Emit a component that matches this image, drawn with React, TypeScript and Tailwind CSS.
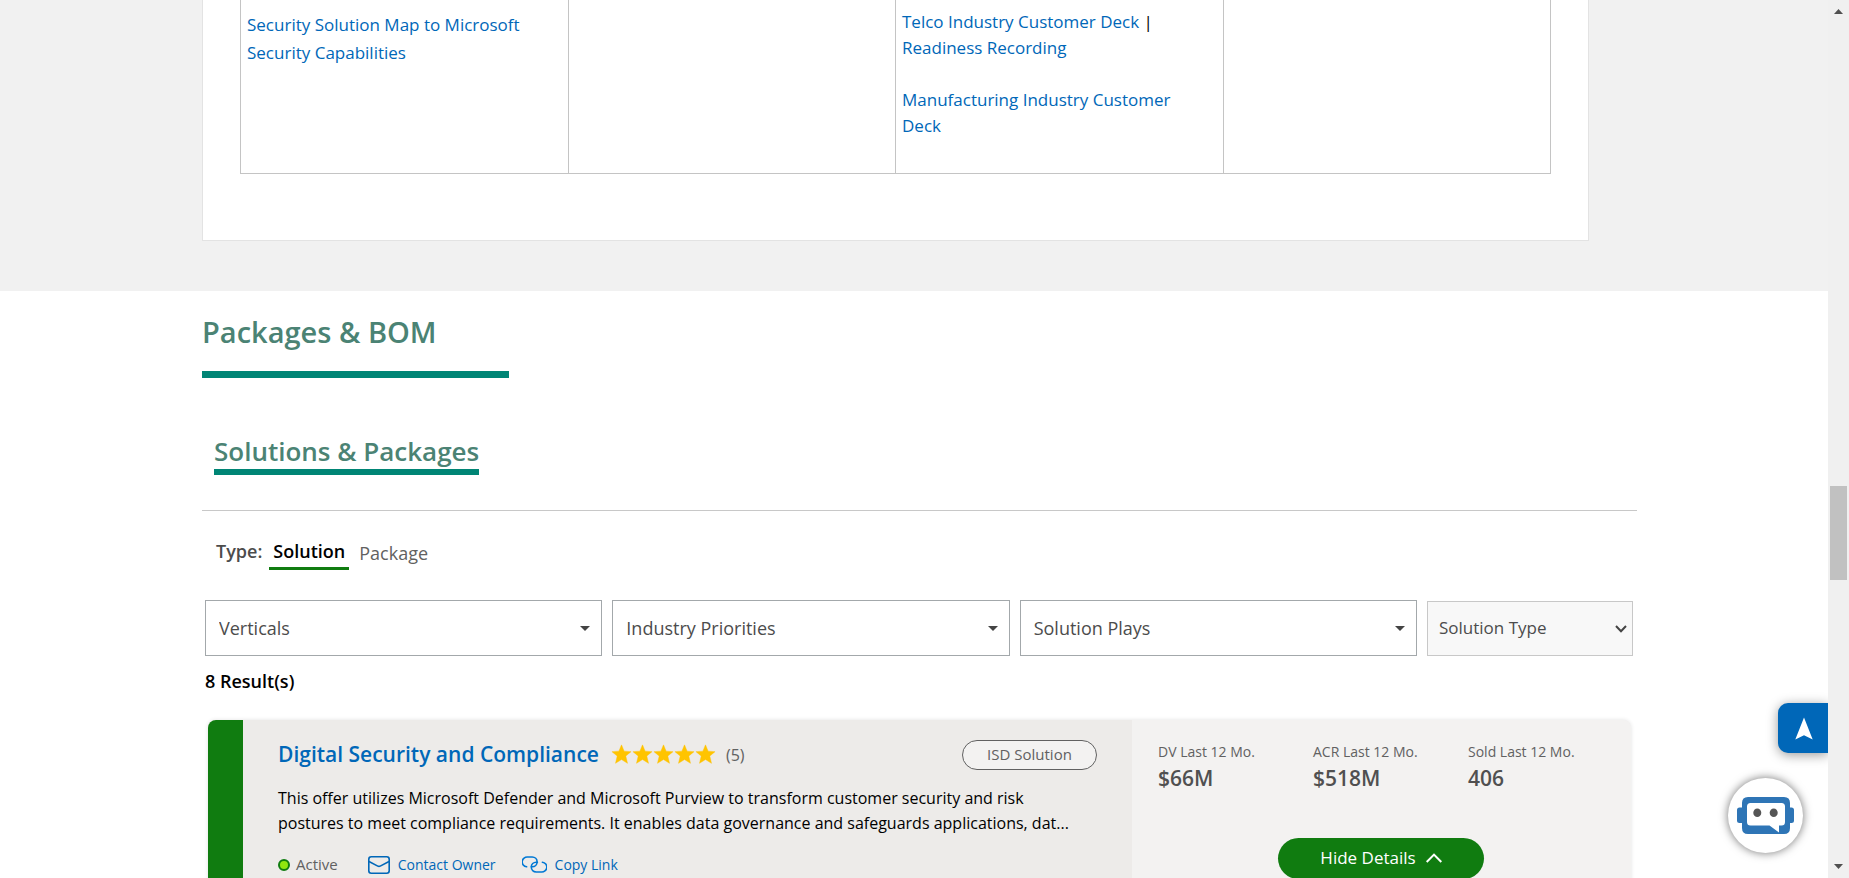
import type { ReactNode } from "react";

const filters = ["Verticals", "Industry Priorities", "Solution Plays"];

const stats = [
  { label: "DV Last 12 Mo.", value: "$66M" },
  { label: "ACR Last 12 Mo.", value: "$518M" },
  { label: "Sold Last 12 Mo.", value: "406" },
];

function DeckLink({ children }: { children: ReactNode }) {
  return (
    <a href="#" className="text-[#0067b8]">
      {children}
    </a>
  );
}

function ResourceTable() {
  const cell = "border border-t-0 border-[#c4c4c4] pl-1.5 pr-5 align-top";
  return (
    <section className="bg-[#f1f1f1] pb-[50px] pl-[202px] pr-[239px]">
      <div className="border border-t-0 border-[#e3e3e3] bg-white px-[37px] pb-[66px]">
        <table className="w-full table-fixed border-collapse text-[17px]">
          <tbody>
            <tr className="h-[173px]">
              <td className={`${cell} pt-[11px] leading-7`}>
                <DeckLink>Security Solution Map to Microsoft Security Capabilities</DeckLink>
              </td>
              <td className={cell} />
              <td className={`${cell} pt-[9px] leading-[26px]`}>
                <p>
                  <DeckLink>Telco Industry Customer Deck</DeckLink> |{" "}
                  <DeckLink>Readiness Recording</DeckLink>
                </p>
                <p className="mt-[26px]">
                  <DeckLink>Manufacturing Industry Customer Deck</DeckLink>
                </p>
              </td>
              <td className={cell} />
            </tr>
          </tbody>
        </table>
      </div>
    </section>
  );
}

function Filter({ name }: { name: string }) {
  return (
    <div className="relative flex-1">
      <select
        aria-label={name}
        className="h-14 w-full appearance-none rounded-none border border-[#a3a8ab] bg-white px-[13px] text-lg text-[#4c4c4c]"
      >
        <option>{name}</option>
      </select>
      <svg viewBox="0 0 10 5" className="pointer-events-none absolute right-3 top-[26px] h-[5px] w-2.5" aria-hidden="true">
        <path d="M0 0h10L5 5z" fill="#444" />
      </svg>
    </div>
  );
}

function Star() {
  return (
    <svg viewBox="0 0 20 20" className="size-[21px]" aria-hidden="true">
      <path
        d="M10 .8l2.5 6 6.6.5-5 4.2 1.6 6.9-5.7-3.6-5.7 3.6 1.6-6.9-5-4.2 6.6-.5z"
        fill="#ffc400"
        stroke="#ffc400"
        strokeWidth=".4"
        strokeLinejoin="round"
      />
    </svg>
  );
}

function SolutionCard() {
  return (
    <article className="ml-1.5 mr-1.5 mt-6 flex h-[320px] overflow-hidden rounded-lg bg-[#f3f2f1] shadow-[0_0_4px_rgba(0,0,0,0.12)]">
      <div className="w-[35px] shrink-0 bg-[#107c10]" />
      <div className="min-w-0 flex-1 bg-[#edebe9] px-[35px] pt-5">
        <div className="flex h-[30px] items-center">
          <h3 className="text-[21px] font-semibold text-[#0067b8]">
            <a href="#">Digital Security and Compliance</a>
          </h3>
          <span className="ml-3 flex">
            <Star />
            <Star />
            <Star />
            <Star />
            <Star />
          </span>
          <span className="ml-2.5 text-base text-[#616161]">(5)</span>
          <span className="ml-auto flex h-[30px] w-[135px] items-center justify-center rounded-2xl border border-[#616161] bg-[#f3f2f1] text-[15px] text-[#616161]">
            ISD Solution
          </span>
        </div>
        <p className="mt-4 text-base leading-[25px] text-black">
          This offer utilizes Microsoft Defender and Microsoft Purview to transform customer security and risk
          <br />
          postures to meet compliance requirements. It enables data governance and safeguards applications, dat...
        </p>
        <div className="mt-[17px] flex h-6 items-center text-sm text-[#0067b8]">
          <span className="size-3 rounded-full border-2 border-[#107c10] bg-[#8fe60f]" />
          <span className="ml-1.5 text-[15px] text-[#616161]">Active</span>
          <a href="#" className="ml-[30px] flex items-center gap-2">
            <svg viewBox="0 0 22 18" className="h-[18px] w-[22px]" fill="none" stroke="#0067b8" strokeWidth="1.6" aria-hidden="true">
              <rect x=".8" y=".8" width="20.4" height="16.4" rx="2.5" />
              <path d="M1 5.500l8.800 4.600q1.200.6 2.400 0L21 5.500" />
            </svg>
            Contact Owner
          </a>
          <a href="#" className="ml-[26px] flex items-center gap-2">
            <svg viewBox="0 0 25 17" className="h-[17px] w-[25px]" fill="none" stroke="#0078d4" strokeWidth="1.6" strokeLinecap="round" aria-hidden="true">
              <path d="M4.600 10.800A5 4.900 0 0 1 5.800 1H10.200a4.900 4.900 0 0 1 0 9.800h-.8" />
              <path d="M20.400 6.200A5 4.900 0 0 1 19.200 16H14.200a4.900 4.900 0 0 1 0-9.800h1.200" />
            </svg>
            Copy Link
          </a>
        </div>
      </div>
      <div className="w-[499px] shrink-0 pl-[26px] pt-5">
        <dl className="flex">
          {stats.map((s) => (
            <div key={s.label} className="w-[155px]">
              <dt className="text-sm leading-6 text-[#616161]">{s.label}</dt>
              <dd className="text-[21px] font-semibold leading-7 text-[#505050]">{s.value}</dd>
            </div>
          ))}
        </dl>
        <button
          type="button"
          className="ml-[120px] mt-[46px] flex h-[41px] w-[206px] items-center justify-center gap-2.5 rounded-full bg-[#107c10] text-[17px] text-white"
        >
          Hide Details
          <svg viewBox="0 0 16 10" className="h-2.5 w-4" fill="none" stroke="#fff" strokeWidth="2" aria-hidden="true">
            <path d="M.7 9L8 1.6 15.3 9" />
          </svg>
        </button>
      </div>
    </article>
  );
}

function ScrollTrack() {
  return (
    <div className="flex w-[21px] shrink-0 flex-col items-center bg-[#f0f0f0] py-[9px]" aria-hidden="true">
      <svg viewBox="0 0 9 5" className="h-[5px] w-[9px]">
        <path d="M0 5h9L4.500 0z" fill="#505050" />
      </svg>
      <div className="flex w-full flex-1 flex-col items-center">
        <div className="flex-[472]" />
        <div className="w-[17px] flex-[94] bg-[#c1c1c1]" />
        <div className="flex-[284]" />
      </div>
      <svg viewBox="0 0 9 5" className="h-[5px] w-[9px]">
        <path d="M0 0h9L4.500 5z" fill="#505050" />
      </svg>
    </div>
  );
}

export default function App() {
  return (
    <div className="flex h-screen overflow-hidden bg-white font-['Open_Sans','Noto_Sans',sans-serif]">
      <main className="relative min-w-0 flex-1 overflow-hidden">
        <ResourceTable />
        <section className="pl-[202px] pr-[191px]">
          <h1 className="pt-[21px] text-[29px] font-semibold leading-10 text-[#4b8374]">Packages &amp; BOM</h1>
          <div className="mt-[19px] h-[7px] w-[307px] bg-[#008575]" />
          <div className="border-b border-[#c8c8c8] pb-[35px] pl-3 pt-[55px]">
            <h2 className="inline-block border-b-[6px] border-[#008575] align-top text-[26px] font-semibold leading-9 text-[#4b8374]">
              Solutions &amp; Packages
            </h2>
          </div>
          <div className="flex items-start pl-3.5 pt-6 text-lg leading-8">
            <span className="font-semibold text-[#4c4c4c]">Type:</span>
            <button type="button" className="ml-[7px] border-b-[3px] border-[#107c10] px-1 font-semibold text-black">
              Solution
            </button>
            <button type="button" className="ml-2.5 pt-0.5 text-[#616161]">
              Package
            </button>
          </div>
          <div className="flex items-end gap-2.5 pl-[3px] pr-1 pt-[30px]">
            {filters.map((name) => (
              <Filter key={name} name={name} />
            ))}
            <div className="relative w-[206px]">
              <select
                aria-label="Solution Type"
                className="h-[55px] w-full appearance-none rounded-none border border-[#c8c8c8] bg-[#f8f8f8] px-[11px] text-[17px] text-[#4c4c4c]"
              >
                <option>Solution Type</option>
              </select>
              <svg viewBox="0 0 12 8" className="pointer-events-none absolute right-1.5 top-6 h-2 w-3" fill="none" stroke="#444" strokeWidth="2" aria-hidden="true">
                <path d="M1 1l5 5.200L11 1" />
              </svg>
            </div>
          </div>
          <p className="mt-2.5 pl-[3px] text-lg font-semibold leading-[30px] text-black">8 Result(s)</p>
          <SolutionCard />
        </section>

        <button
          type="button"
          aria-label="Back to top"
          className="absolute bottom-[125px] right-0 flex size-[50px] items-center justify-center rounded-l-[10px] bg-[#0067b8] pl-0.5 shadow-[0_2px_12px_rgba(0,0,0,0.4)]"
        >
          <svg viewBox="0 0 18 23" className="h-[23px] w-[18px]" aria-hidden="true">
            <path d="M9 .5L17.700 22.500 9 18.300 .3 22.500z" fill="#fff" />
          </svg>
        </button>
        <button
          type="button"
          aria-label="Chat"
          className="absolute bottom-[25px] right-[25px] flex size-[75px] items-center justify-center rounded-full bg-white shadow-[0_0_10px_rgba(0,0,0,0.55)]"
        >
          <svg viewBox="0 0 57 37" className="h-[37px] w-[57px]" aria-hidden="true">
            <path
              d="M11 0h36q6 0 6 6v4.500h1.500q2.500 0 2.500 2.500v10.500q0 2.500-2.500 2.500H53v5q0 6-6 6H11q-6 0-6-6v-5H2.500Q0 26 0 23.500V13q0-2.500 2.500-2.500H5V6q0-6 6-6z"
              fill="#2e75b6"
            />
            <path d="M13.500 6h31q3.500 0 3.500 3.500v15.500q0 3.500-3.500 3.500H42v7L32.500 28.500h-19Q10 28.500 10 25V9.500Q10 6 13.500 6z" fill="#fff" />
            <ellipse cx="20.300" cy="15.700" rx="4" ry="4.300" fill="#555" />
            <ellipse cx="36.700" cy="15.700" rx="4" ry="4.300" fill="#555" />
          </svg>
        </button>
      </main>
      <ScrollTrack />
    </div>
  );
}
